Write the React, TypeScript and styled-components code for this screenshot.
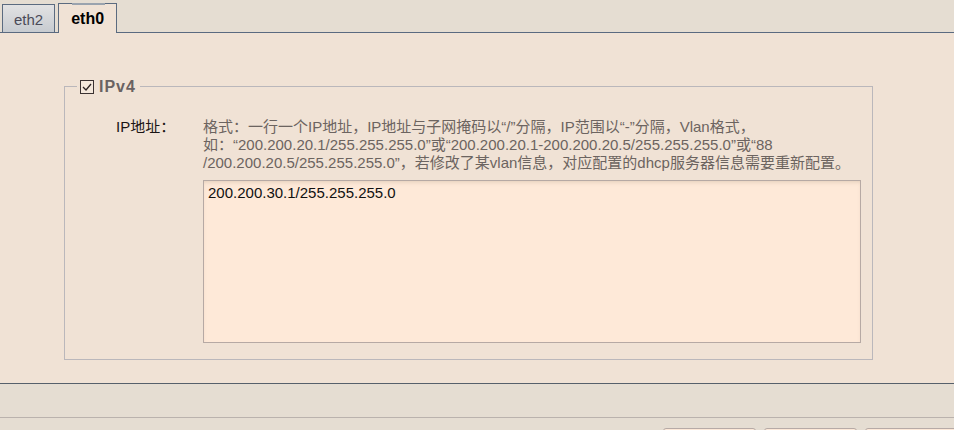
import React from 'react';
import styled, { createGlobalStyle } from 'styled-components';

const Global = createGlobalStyle`
  html, body { margin: 0; padding: 0; }
  body {
    font-family: "Liberation Sans", "Noto Sans CJK SC", sans-serif;
    background: #e5ddd2;
  }
`;

const Page = styled.div`
  width: 954px;
  height: 430px;
  overflow: hidden;
  display: flex;
  flex-direction: column;
  background: #e5ddd2;
`;

const TabBar = styled.div`
  height: 33px;
  box-sizing: border-box;
  display: flex;
  align-items: flex-end;
  gap: 3px;
  padding-left: 2px;
  border-bottom: 1px solid #5a6a80;
  flex-shrink: 0;
`;

const Tab = styled.div<{ $active?: boolean }>`
  position: relative;
  box-sizing: border-box;
  height: ${p => (p.$active ? 30 : 28)}px;
  margin-bottom: ${p => (p.$active ? -1 : 0)}px;
  padding: 0 ${p => (p.$active ? 12 : 11)}px;
  display: flex;
  align-items: center;
  padding-top: ${p => (p.$active ? 1 : 2)}px;
  border: 1px solid #5b6b80;
  border-bottom: none;
  background: ${p => (p.$active ? '#f0e2d5' : 'linear-gradient(#e2e2e3, #c7cbd0)')};
  color: ${p => (p.$active ? '#000' : '#4a4a58')};
  font-weight: ${p => (p.$active ? 700 : 400)};
  font-size: ${p => (p.$active ? 16 : 15)}px;
  font-family: "Liberation Sans", sans-serif;
  &::before {
    content: '';
    display: ${p => (p.$active ? 'block' : 'none')};
    position: absolute;
    top: -1px;
    left: 13px;
    width: 33px;
    height: 2px;
    background: #9aa3ae;
  }
`;

const Content = styled.div`
  height: 351px;
  box-sizing: border-box;
  background: #f0e2d5;
  border-bottom: 1px solid #56606b;
  padding: 45px 0 0 64px;
  flex-shrink: 0;
`;

const Group = styled.fieldset`
  margin: 0;
  width: 809px;
  height: 282px;
  box-sizing: border-box;
  border: 1px solid #bab7bb;
  padding: 23px 11px 0 0;
  min-inline-size: 0;
`;

const Legend = styled.legend`
  margin-left: 12px;
  padding: 0 4px 0 3px;
  display: flex;
  align-items: center;
  gap: 5px;
  height: 17px;
`;

const Check = styled.span`
  width: 14px;
  height: 14px;
  box-sizing: border-box;
  border: 1px solid #3b3232;
  background: #f4e8dc;
  display: flex;
  align-items: center;
  justify-content: center;
`;

const LegendText = styled.span`
  font-family: "Liberation Sans", sans-serif;
  font-weight: 700;
  font-size: 16px;
  letter-spacing: 1px;
  color: #6a6262;
`;

const Row = styled.div`
  display: grid;
  grid-template-columns: 87px 658px;
  padding-left: 51px;
`;

const Label = styled.div`
  font-size: 15px;
  line-height: 18px;
  color: #1a1414;
`;

const Right = styled.div`
  display: flex;
  flex-direction: column;
  gap: 8px;
`;

const Help = styled.div`
  font-size: 15px;
  line-height: 18px;
  color: #6c6460;
  white-space: nowrap;
`;

const Area = styled.div`
  height: 163px;
  box-sizing: border-box;
  border: 1px solid #b6a9a4;
  background: #fee9d8;
  box-shadow: inset 0 3px 4px -2px rgba(140, 120, 90, 0.25);
  padding: 3px 4px;
  font-size: 15px;
  line-height: 18px;
  color: #111;
`;

const Footer = styled.div`
  flex: 1;
  display: flex;
  flex-direction: column;
`;

const FooterBar = styled.div`
  height: 34px;
  box-sizing: border-box;
  border-bottom: 1px solid #bab2ad;
  flex-shrink: 0;
`;

const Buttons = styled.div`
  display: flex;
  gap: 8px;
  padding: 10px 0 0 663px;
`;

const Button = styled.div`
  width: 93px;
  height: 26px;
  flex-shrink: 0;
  box-sizing: border-box;
  border: 1px solid #b6aaa6;
  border-radius: 3px;
  background: #fde8d7;
`;

export default function App() {
  return (
    <>
      <Global />
      <Page>
        <TabBar>
          <Tab>eth2</Tab>
          <Tab $active>eth0</Tab>
        </TabBar>
        <Content>
          <Group>
            <Legend>
              <Check>
                <svg width="10" height="8" viewBox="0 0 10 8">
                  <path d="M1 4 L4 7 L9 1" fill="none" stroke="#2b2222" strokeWidth="1.3" />
                </svg>
              </Check>
              <LegendText>IPv4</LegendText>
            </Legend>
            <Row>
              <Label>IP地址：</Label>
              <Right>
                <Help>
                  格式：一行一个IP地址，IP地址与子网掩码以“/”分隔，IP范围以“-”分隔，Vlan格式，
                  <br />
                  如：“200.200.20.1/255.255.255.0”或“200.200.20.1-200.200.20.5/255.255.255.0”或“88
                  <br />
                  /200.200.20.5/255.255.255.0”，若修改了某vlan信息，对应配置的dhcp服务器信息需要重新配置。
                </Help>
                <Area>200.200.30.1/255.255.255.0</Area>
              </Right>
            </Row>
          </Group>
        </Content>
        <Footer>
          <FooterBar />
          <Buttons>
            <Button />
            <Button />
            <Button />
          </Buttons>
        </Footer>
      </Page>
    </>
  );
}
